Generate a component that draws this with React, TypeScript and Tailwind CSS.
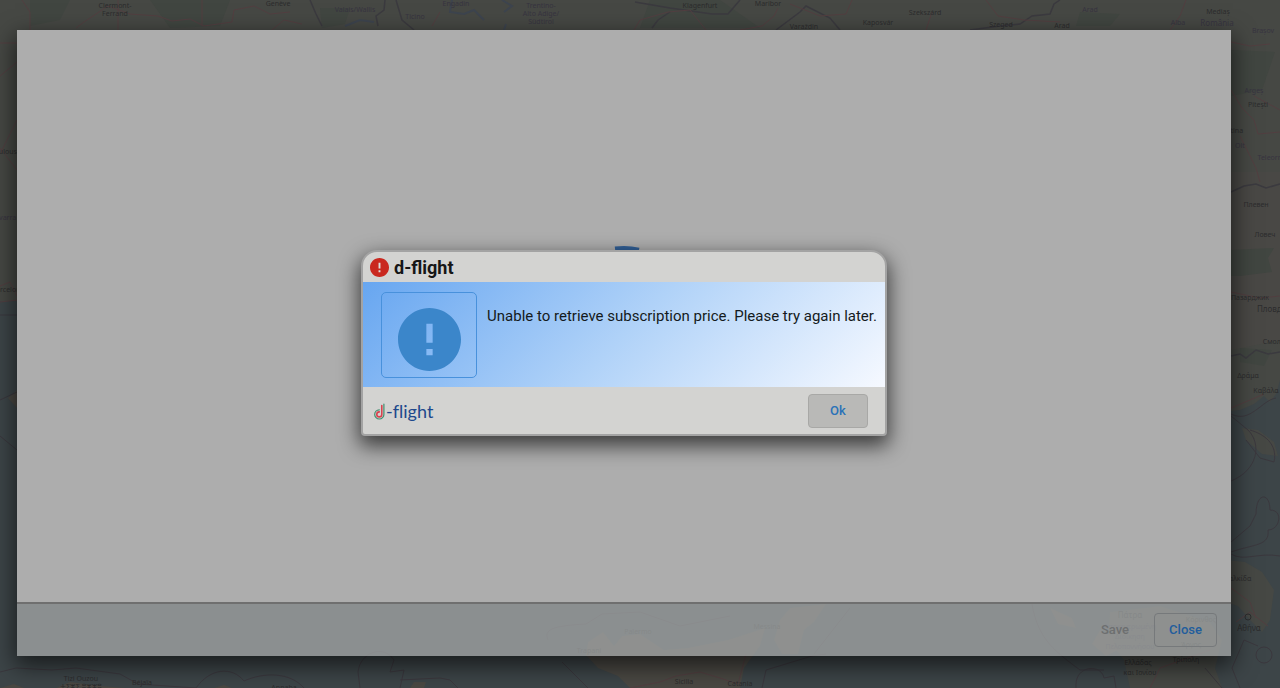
type Label = { x: number; y: number; text: string; size?: number; soft?: boolean }

const labels: Label[] = [
    { x: 115, y: 8, text: 'Clermont-' },
    { x: 115, y: 16, text: 'Ferrand' },
    { x: 278, y: 6, text: 'Genève' },
    { x: 355, y: 12, text: 'Valais/Wallis', soft: true },
    { x: 415, y: 19, text: 'Ticino', soft: true },
    { x: 456, y: 6, text: 'Engadin', soft: true },
    { x: 541, y: 8, text: 'Trentino-', soft: true },
    { x: 541, y: 16, text: 'Alto Adige/', soft: true },
    { x: 541, y: 24, text: 'Südtirol', soft: true },
    { x: 700, y: 8, text: 'Klagenfurt' },
    { x: 768, y: 6, text: 'Maribor' },
    { x: 804, y: 29, text: 'Varaždin' },
    { x: 878, y: 25, text: 'Kaposvár' },
    { x: 925, y: 15, text: 'Szekszárd' },
    { x: 1001, y: 27, text: 'Szeged' },
    { x: 1062, y: 28, text: 'Arad' },
    { x: 1090, y: 12, text: 'Arad', soft: true },
    { x: 1178, y: 25, text: 'Alba', soft: true },
    { x: 1218, y: 14, text: 'Mediaș' },
    { x: 1217, y: 26, text: 'România', size: 8, soft: true },
    { x: 1263, y: 33, text: 'Brașov', soft: true },
    { x: 1254, y: 93, text: 'Argeș', soft: true },
    { x: 1258, y: 107, text: 'Pitești' },
    { x: 1232, y: 133, text: 'Slatina' },
    { x: 1240, y: 148, text: 'Olt', soft: true },
    { x: 1275, y: 160, text: 'Teleorman', soft: true },
    { x: 1256, y: 207, text: 'Плевен' },
    { x: 1265, y: 237, text: 'Ловеч' },
    { x: 1250, y: 300, text: 'Пазарджик' },
    { x: 1274, y: 312, text: 'Пловдив', size: 8 },
    { x: 1276, y: 344, text: 'Смолян' },
    { x: 1248, y: 378, text: 'Δράμα' },
    { x: 1266, y: 393, text: 'Καβάλα' },
    { x: 1238, y: 581, text: 'Χαλκίδα' },
    { x: 1249, y: 631, text: 'Αθήνα', size: 8 },
    { x: 1130, y: 618, text: 'Πάτρα', size: 8 },
    { x: 1130, y: 629, text: 'Αποκεντρωμένη', soft: true },
    { x: 1130, y: 639, text: 'Διοίκηση', soft: true },
    { x: 1130, y: 649, text: 'Πελοποννήσου', soft: true },
    { x: 1138, y: 665, text: 'Ελλάδας' },
    { x: 1140, y: 675, text: 'και Ιονίου' },
    { x: 1186, y: 662, text: 'Τρίπολη' },
    { x: 1201, y: 622, text: 'Κόρινθος' },
    { x: 1191, y: 647, text: 'Άργος' },
    { x: 6, y: 154, text: 'Toulouse' },
    { x: 3, y: 220, text: 'Navarra', soft: true },
    { x: 8, y: 292, text: 'Barcelona' },
    { x: 81, y: 681, text: 'Tizi Ouzou' },
    { x: 81, y: 689, text: 'ⵜⵉⵣⵉ ⵓⵣⵣⵓ' },
    { x: 142, y: 685, text: 'Béjaïa' },
    { x: 284, y: 690, text: 'Annaba' },
    { x: 638, y: 634, text: 'Palermo' },
    { x: 589, y: 653, text: 'Trapani' },
    { x: 767, y: 629, text: 'Messina' },
    { x: 684, y: 684, text: 'Sicilia' },
    { x: 740, y: 686, text: 'Catania' },
]

const MapBackground = () => (
    <svg
        aria-hidden="true"
        className="absolute inset-0 h-full w-full"
        viewBox="0 0 1280 688"
        preserveAspectRatio="none"
    >
        <rect width="1280" height="688" fill="#3d4548" />
        {/* Land */}
        <g fill="#464844">
            <path d="M0 0H1280V380L1276 394L1270 402L1264 396L1254 404L1240 410L1220 412V310L0 301Z" />
            <path d="M1225 560L1245 562L1262 572L1274 590L1270 620L1262 632L1250 620L1238 606L1225 602Z" />
            <path d="M1110 612L1160 606L1210 622L1222 640L1215 668L1222 688H1130L1124 660L1108 640Z" />
            <path d="M1242 428L1258 430L1274 442L1278 456L1262 454L1246 440Z" />
        </g>
        <g fill="#4a4843">
            <path d="M1231 172H1280V340L1231 350Z" fill="#494845" />
            <path d="M586 655L588 642L603 632L614 646L622 636L640 634L664 650L688 648L728 640L765 628L760 646L744 668L740 688H630L618 676L598 668Z" />
            <path d="M790 608L826 604L814 622L804 630L798 654L782 654L774 640L780 620Z" />
            <path d="M1100 630L1112 636L1118 650L1106 656L1092 644Z" />
            <path d="M1050 608L1072 618L1076 628L1058 624Z" />
            <path d="M8 398L17 390V408Z" />
            <path d="M0 688L14 684L24 688ZM56 688L70 682L100 686L126 688ZM214 688L224 685L232 688Z" />
            <path d="M410 688L414 682L426 682L424 688Z" />
        </g>
        <g fill="#414641">
            <path d="M30 0H70L60 20L30 26ZM150 0H230L220 26L170 28ZM320 8H350L345 24L322 28ZM650 0H720L760 28H640ZM1080 12L1120 14L1110 26H1076Z" />
            <path d="M1231 250L1274 248L1268 258L1272 272L1240 276H1231Z" />
            <path d="M1231 50L1275 52L1262 90L1231 96ZM1240 348L1272 350L1264 366L1240 362Z" />
        </g>
        {/* Lakes */}
        <g fill="none" stroke="#3d444e" strokeWidth="2">
            <path d="M345 26L360 20L374 22M452 0L450 12L464 14L474 10L484 20M502 0L512 6L504 12M506 24L504 30" />
        </g>
        {/* Borders */}
        <g fill="none" stroke="#3b3a3f" strokeWidth="1.5">
            <path d="M310 0L316 14L322 26M385 0L384 10L376 16L378 26M396 0L402 20L414 30M635 2L670 8L712 14L728 14L740 0M652 28L658 20L670 12M776 30L800 12L806 6L830 18L840 30" />
            <path d="M970 30L1000 26L1020 24L1032 16L1050 14L1054 4L1060 0M1231 192L1244 186L1256 184L1266 188L1280 184" />
            <path d="M1231 356L1240 354L1246 358L1256 350L1268 354L1280 352" />
        </g>
        <g fill="none" stroke="#3b383e" strokeWidth="1">
            <path d="M1231 414C1250 424 1262 400 1276 398M1231 416L1248 430C1262 444 1258 470 1231 481M1250 430C1264 434 1278 444 1274 462L1260 458L1246 440" />
            <path d="M1231 542L1250 526L1256 514C1256 492 1270 492 1270 510C1284 510 1280 530 1268 530C1270 546 1254 544 1231 552M1231 554C1244 562 1258 552 1280 556" />
            <circle cx="1264" cy="655" r="8" />
            <path d="M1205 668L1222 688M1240 688L1232 668L1244 640L1258 646M1076 688C1074 664 1102 664 1104 678L1114 676L1116 688M1032 604C1038 640 1056 652 1080 670L1104 670" />
            <path d="M0 672L16 668L52 670L76 668L120 674L138 684L196 688C210 668 232 666 244 681C264 672 290 672 304 688" />
            <path d="M400 680L440 678L450 680L462 692M562 662L588 688M548 640C544 630 550 626 586 624L602 614L640 612L680 626L730 616M826 654L812 656L766 670L762 688M850 608L814 654" />
            <path d="M360 688L358 672C360 652 384 644 394 660L390 672L404 670L400 688M0 315H17M0 400L17 392M0 436L17 450" />
        </g>
        {/* Roads */}
        <g fill="none" stroke="#523f41" strokeWidth="1">
            <path d="M22 0L30 12L30 30M76 28L84 22L108 6L130 14L158 16L172 21L190 19L204 26L232 22L234 10L254 6L270 14L290 12M118 0V30M202 0V26M272 30L284 20L302 24" />
            <path d="M432 26L440 12M634 30L640 20L668 12L690 10L706 30M740 30L762 26L774 16L778 8M790 4L820 16L846 14L852 0M986 0L998 16L1024 20L1060 22M926 30L932 12M1170 30L1180 16L1186 0" />
            <path d="M1231 42L1250 46L1270 44M1231 90L1242 108L1254 120L1258 134L1280 132M1254 96L1280 110M1240 136L1256 168L1260 182M1231 292L1260 298L1280 296M1231 408L1250 400L1264 394" />
            <path d="M1231 588L1250 602L1256 618M1236 622L1250 612L1268 626M630 688L660 682L676 676L700 672L720 678L738 684L746 654M1150 688L1160 668L1210 650" />
            <path d="M0 43H17M0 76L17 62M0 154L17 120M0 148L17 170M0 286L10 282L17 296M0 302L17 300" />
        </g>
        <g fontFamily="'Noto Sans', 'DejaVu Sans', sans-serif" textAnchor="middle">
            {labels.map((l, i) => (
                <text key={i} x={l.x} y={l.y} fontSize={l.size ?? 7} fill={l.soft ? '#373440' : '#2c2c2d'}>
                    {l.text}
                </text>
            ))}
        </g>
        <circle cx="1248" cy="617" r="3" fill="none" stroke="#2c2c2d" />
    </svg>
)

const AlertIcon = ({ className }: { className: string }) => (
    <svg aria-hidden="true" viewBox="2 2 20 20" className={className} fill="currentColor">
        <path d="M12 2C6.48 2 2 6.48 2 12s4.48 10 10 10 10-4.48 10-10S17.52 2 12 2zm1 15h-2v-2h2v2zm0-4h-2V7h2v6z" />
    </svg>
)

const Logo = () => (
    <div className="flex items-center gap-px text-[#20488c]">
        <svg aria-hidden="true" viewBox="0 0 11 17" className="h-[17px] w-[11px]" fill="none" strokeLinecap="round">
            <path d="M9.9 1V11.4A4.6 4.6 0 1 1 5.3 6.8" stroke="#3f8f70" strokeWidth="1.2" />
            <path d="M7.8 2.5V11.4A2.5 2.5 0 1 1 5.3 8.9" stroke="#d8434f" strokeWidth="1.6" />
        </svg>
        <span className="font-[Lato,sans-serif] text-[18px] leading-5 [font-variant-ligatures:none]">-flight</span>
    </div>
)

const ErrorDialog = () => (
    <div
        role="alertdialog"
        aria-labelledby="dialog-title"
        aria-describedby="dialog-message"
        className="overflow-hidden rounded-t-2xl rounded-b-sm border-2 border-[#a3a3a3] bg-[#d3d3d1] shadow-[0_8px_20px_2px_rgba(0,0,0,0.65)]"
    >
        <div className="flex h-[30px] items-center gap-[5px] px-[7px]">
            <span className="rounded-full bg-[#dededc] text-[#c9281f]">
                <AlertIcon className="size-[19px]" />
            </span>
            <h2 id="dialog-title" className="pt-px text-[18px] leading-6 font-bold text-[#161616]">
                d-flight
            </h2>
        </div>

        <div className="flex h-[105px] items-start gap-[10px] bg-linear-135 from-[#67a6f0] via-[#b0d2f8] to-[#f6f9ff] pt-[10px] pr-[8px] pl-[18px]">
            <div className="flex h-[86px] w-[96px] justify-center rounded-[5px] border border-[#4891dc] pt-[15px]">
                <AlertIcon className="size-[63px] text-[#3b86ca]" />
            </div>
            <p id="dialog-message" className="pt-3 text-[15px] leading-6 whitespace-nowrap text-[#141a20]">
                Unable to retrieve subscription price. Please try again later.
            </p>
        </div>

        <div className="flex h-[47px] items-center justify-between pt-px pr-[17px] pl-[11px]">
            <Logo />
            <button
                type="button"
                className="h-[34px] w-[60px] rounded-[4px] border border-[#a8a8a6] bg-[#b9b9b7] text-[13px] font-medium text-[#2a72b8]"
            >
                Ok
            </button>
        </div>
    </div>
)

export default function App() {
    return (
        <div className="relative flex min-h-screen overflow-hidden bg-[#3d4548] pt-[30px] pr-[49px] pb-8 pl-[17px] font-[Roboto,sans-serif]">
            <MapBackground />

            <div className="relative flex flex-1 flex-col shadow-[0_8px_22px_2px_rgba(0,0,0,0.6)]">
                <main className="flex flex-1 items-center justify-center bg-[#adadad]">
                    {/* Spinner */}
                    <svg aria-hidden="true" viewBox="0 0 140 140" className="size-[140px]" fill="none">
                        <path d="M61 2.6A68 68 0 0 1 85 3.7" stroke="#315f96" strokeWidth="4" />
                    </svg>
                </main>

                <footer className="flex h-[54px] items-center justify-end gap-2 border-t-2 border-[#6f6f6f] bg-[#acafaf]/70 bg-clip-padding pr-[14px]">
                    <button type="button" disabled className="h-[34px] px-[17px] text-[13px] font-medium text-[#6d6f70]">
                        Save
                    </button>
                    <button
                        type="button"
                        className="h-[34px] w-[63px] rounded-[4px] border border-[#76797b] text-[13px] font-medium text-[#225d9c]"
                    >
                        Close
                    </button>
                </footer>

                <div className="absolute inset-0 flex items-center justify-center">
                    <ErrorDialog />
                </div>
            </div>
        </div>
    )
}
